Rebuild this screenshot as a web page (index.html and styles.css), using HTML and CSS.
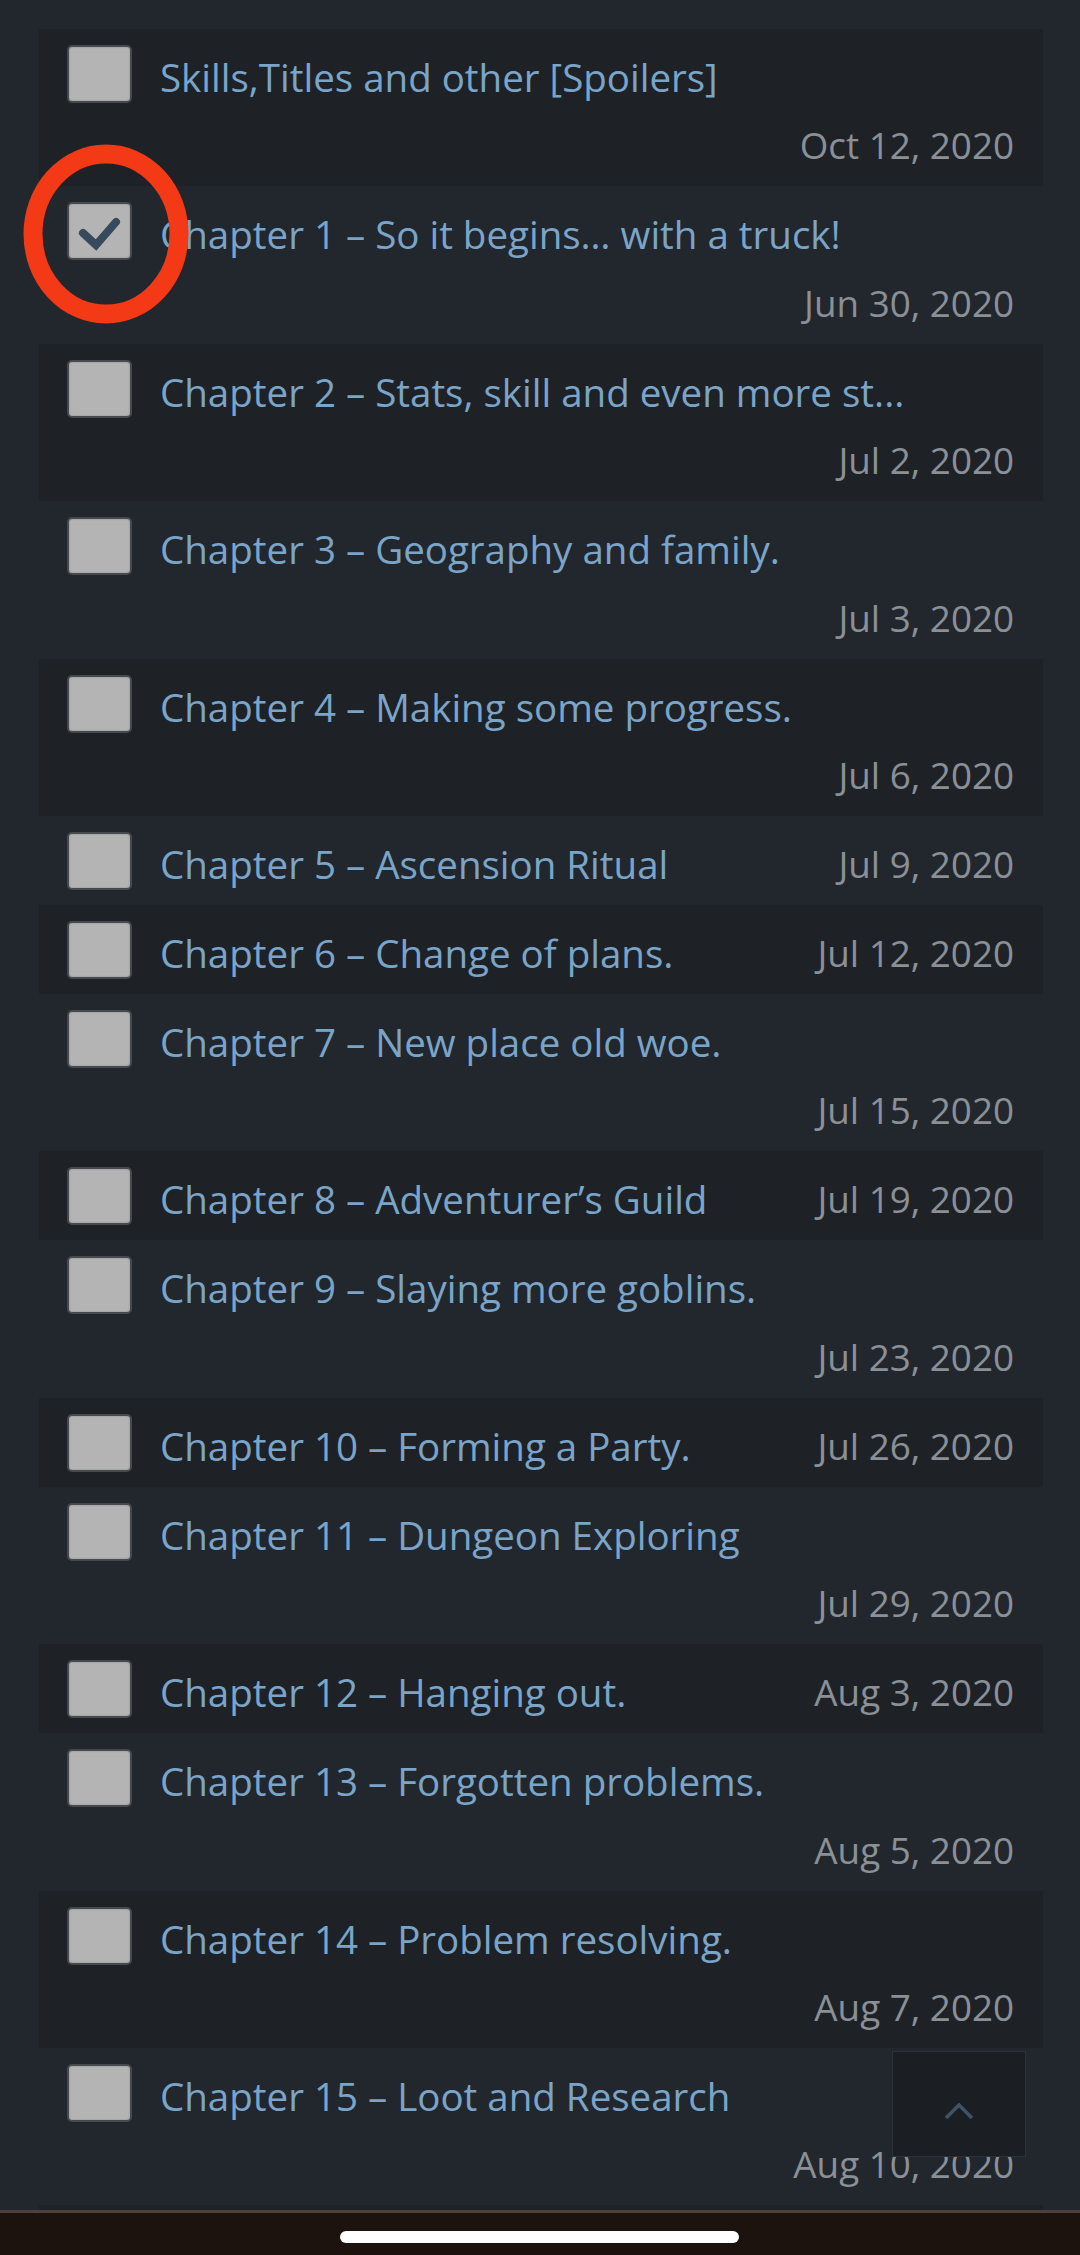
FILE: index.html
```
<!DOCTYPE html>
<html lang="en">
<head>
<meta charset="utf-8">
<title>Chapters</title>
<link rel="stylesheet" href="styles.css">
</head>
<body>
<div class="page">
  <ul class="chapters">
    <li class="row stacked"><span class="check"></span><div class="info"><a class="title">Skills,Titles and other [Spoilers]</a><span class="date">Oct 12, 2020</span></div></li>
    <li class="row stacked"><span class="check checked"><svg viewBox="0 0 65 58" width="65" height="58"><path d="M16 31 L29 43 L49 20" fill="none" stroke="#374a5d" stroke-width="8" stroke-linecap="round" stroke-linejoin="miter"/></svg></span><div class="info"><a class="title">Chapter 1 – So it begins… with a truck!</a><span class="date">Jun 30, 2020</span></div></li>
    <li class="row stacked"><span class="check"></span><div class="info"><a class="title">Chapter 2 – Stats, skill and even more st...</a><span class="date">Jul 2, 2020</span></div></li>
    <li class="row stacked"><span class="check"></span><div class="info"><a class="title">Chapter 3 – Geography and family.</a><span class="date">Jul 3, 2020</span></div></li>
    <li class="row stacked"><span class="check"></span><div class="info"><a class="title">Chapter 4 – Making some progress.</a><span class="date">Jul 6, 2020</span></div></li>
    <li class="row"><span class="check"></span><div class="info"><a class="title">Chapter 5 – Ascension Ritual</a><span class="date">Jul 9, 2020</span></div></li>
    <li class="row"><span class="check"></span><div class="info"><a class="title">Chapter 6 – Change of plans.</a><span class="date">Jul 12, 2020</span></div></li>
    <li class="row stacked"><span class="check"></span><div class="info"><a class="title">Chapter 7 – New place old woe.</a><span class="date">Jul 15, 2020</span></div></li>
    <li class="row"><span class="check"></span><div class="info"><a class="title">Chapter 8 – Adventurer’s Guild</a><span class="date">Jul 19, 2020</span></div></li>
    <li class="row stacked"><span class="check"></span><div class="info"><a class="title">Chapter 9 – Slaying more goblins.</a><span class="date">Jul 23, 2020</span></div></li>
    <li class="row"><span class="check"></span><div class="info"><a class="title">Chapter 10 – Forming a Party.</a><span class="date">Jul 26, 2020</span></div></li>
    <li class="row stacked"><span class="check"></span><div class="info"><a class="title">Chapter 11 – Dungeon Exploring</a><span class="date">Jul 29, 2020</span></div></li>
    <li class="row"><span class="check"></span><div class="info"><a class="title">Chapter 12 – Hanging out.</a><span class="date">Aug 3, 2020</span></div></li>
    <li class="row stacked"><span class="check"></span><div class="info"><a class="title">Chapter 13 – Forgotten problems.</a><span class="date">Aug 5, 2020</span></div></li>
    <li class="row stacked"><span class="check"></span><div class="info"><a class="title">Chapter 14 – Problem resolving.</a><span class="date">Aug 7, 2020</span></div></li>
    <li class="row stacked"><span class="check"></span><div class="info"><a class="title">Chapter 15 – Loot and Research</a><span class="date">Aug 10, 2020</span></div></li>
    <li class="row-end"></li>
  </ul>
  <svg class="annotation" width="190" height="200" viewBox="0 0 190 200"><ellipse cx="83" cy="90" rx="73" ry="80" fill="none" stroke="#f33915" stroke-width="19"/></svg>
</div>
<button class="to-top" type="button" aria-label="Back to top"><svg width="32" height="18" viewBox="0 0 32 18"><path d="M3 16 L16 3 L29 16" fill="none" stroke="#3d5468" stroke-width="3.5"/></svg></button>
<div class="navbar"><span class="pill"></span></div>
</body>
</html>
```

FILE: styles.css
```
html, body {
  margin: 0;
  padding: 0;
}
body {
  background: #22272e;
  font-family: "Open Sans", "Noto Sans", sans-serif;
  height: 2255px;
  overflow: hidden;
}
.page {
  position: relative;
  padding: 29px 37px 0 39px;
}
.chapters {
  list-style: none;
  margin: 0;
  padding: 0;
}
.row {
  display: flex;
  align-items: flex-start;
  padding: 16px 29px 9px 28px;
}
.chapters > li:nth-child(odd) {
  background: #1e2227;
}
.row-end {
  height: 60px;
}
.check {
  flex: none;
  box-sizing: border-box;
  width: 65px;
  height: 58px;
  margin-right: 28px;
  background: #b4b4b4;
  border: 2px solid #46494d;
  border-radius: 5px;
  box-shadow: inset 0 0 2px rgba(0,0,0,0.25);
  position: relative;
}
.check svg {
  position: absolute;
  left: -2px;
  top: -2px;
}
.info {
  flex: 1;
  min-width: 0;
  display: flex;
  flex-wrap: nowrap;
  align-items: flex-start;
}
.title {
  color: #7aa5c9;
  font-size: 38.5px;
  line-height: 64px;
  height: 64px;
  white-space: nowrap;
  overflow: hidden;
  text-overflow: ellipsis;
  min-width: 0;
}
.date {
  color: #8b9097;
  font-size: 36.8px;
  line-height: 64px;
  height: 64px;
  margin-left: auto;
  white-space: nowrap;
  flex: none;
  padding-left: 20px;
}
.stacked .info {
  flex-wrap: wrap;
}
.stacked .date {
  flex-basis: 100%;
  text-align: right;
  margin-top: 4.4px;
  padding-left: 0;
}
.annotation {
  position: absolute;
  left: 23px;
  top: 144px;
}
.to-top {
  position: fixed;
  right: 54px;
  bottom: 98px;
  width: 134px;
  height: 106px;
  background: #1b1f23;
  border: 1px solid #2d3237;
  padding: 0;
  display: flex;
  align-items: center;
  justify-content: center;
}
.to-top svg {
  margin-top: 14px;
}
.navbar {
  position: fixed;
  left: 0;
  right: 0;
  bottom: 0;
  height: 42px;
  background: #1c120e;
  border-top: 3px solid #4e413b;
}
.pill {
  position: absolute;
  left: 340px;
  top: 18px;
  width: 399px;
  height: 12px;
  border-radius: 6px;
  background: #ffffff;
}
```
